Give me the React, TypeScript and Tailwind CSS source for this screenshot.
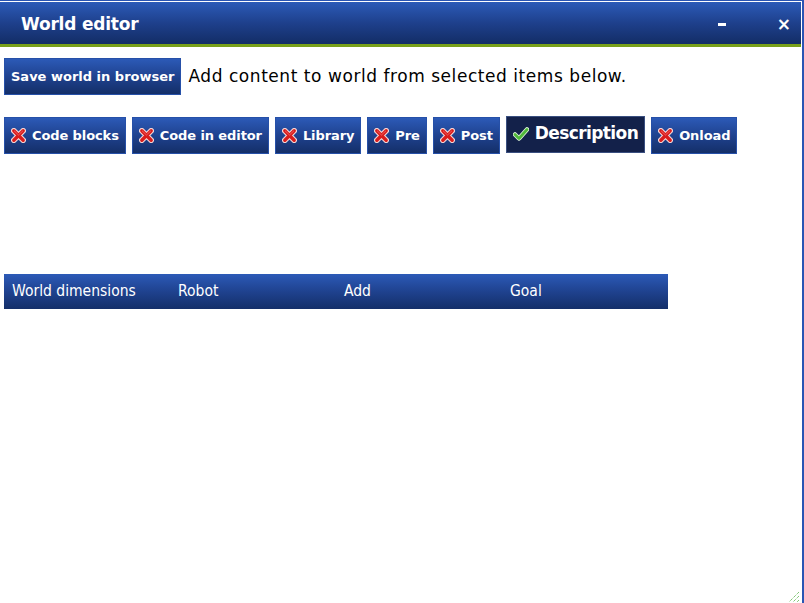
import React from 'react';

function CrossIcon() {
  return (
    <svg width="15" height="15" viewBox="0 0 16 16" className="shrink-0">
      <path d="M3 3 L13 13 M13 3 L3 13" stroke="#f3d6d6" strokeWidth="6" strokeLinecap="round" />
      <path d="M3 3 L13 13 M13 3 L3 13" stroke="#d81c1c" strokeWidth="3.6" strokeLinecap="round" />
      <path d="M3.5 3.2 L8 7.5 M12.5 3.2 L8.5 7" stroke="#f06060" strokeWidth="1" strokeLinecap="round" />
    </svg>
  );
}

function CheckIcon() {
  return (
    <svg width="16" height="14" viewBox="0 0 16 14" className="shrink-0">
      <path d="M2 7.5 L6 11.5 L14 2.5" fill="none" stroke="#dff5d8" strokeWidth="4.5" strokeLinecap="round" strokeLinejoin="round" />
      <path d="M2 7.5 L6 11.5 L14 2.5" fill="none" stroke="#4fb83a" strokeWidth="2.8" strokeLinecap="round" strokeLinejoin="round" />
    </svg>
  );
}

export default function App() {
  const items = [
    { label: "Code blocks", on: false },
    { label: "Code in editor", on: false },
    { label: "Library", on: false },
    { label: "Pre", on: false },
    { label: "Post", on: false },
    { label: "Description", on: true },
    { label: "Onload", on: false },
  ];

  const tabs = ["World dimensions", "Robot", "Add", "Goal"];

  return (
    <div className="w-[804px] h-[603px] overflow-hidden bg-white" style={{ fontFamily: '"DejaVu Sans", Verdana, sans-serif' }}>
      <div className="h-[603px] border-t border-r-2 border-[#2a55b3] pt-[1px] pr-[1px] flex flex-col">
        {/* Title bar */}
        <div className="h-[42px] flex items-center pt-[3px] pl-[21px] pr-[10px] bg-linear-to-b from-[#2c5bb8] via-[#1e408c] to-[#132d66] text-white">
          <span className="font-bold text-[17px] tracking-[-0.2px]">World editor</span>
          <div className="ml-auto flex items-center gap-[51px]">
            <span className="block w-[8px] h-[3px] bg-white" />
            <span className="font-bold text-[17px] leading-none">×</span>
          </div>
        </div>
        <div className="h-[3px] bg-[#78a01a]" />

        {/* Content */}
        <div className="relative flex-1 pl-[4px] pt-[11px]">
          <div className="flex items-center gap-[7px]">
            <button className="h-[37px] px-[6px] text-white font-bold text-[13px] bg-linear-to-b from-[#2c5ab7] via-[#1f428f] to-[#142f69] border border-[#2650a8]">
              Save world in browser
            </button>
            <span className="text-[17px] text-black tracking-[0.55px]">Add content to world from selected items below.</span>
          </div>

          <div className="flex items-center gap-[6px] mt-[22px]">
            {items.map((it, i) =>
              it.on ? (
                <button key={i} className="h-[37px] -mt-[3px] px-[6px] flex items-center gap-[6px] text-white font-bold text-[17px] tracking-[-0.6px] bg-[#13214a] border border-[#3a4f80]">
                  <CheckIcon />
                  {it.label}
                </button>
              ) : (
                <button key={i} className="h-[37px] px-[6px] flex items-center gap-[6px] text-white font-bold text-[13px] tracking-[-0.1px] bg-linear-to-b from-[#2c5ab7] via-[#1f428f] to-[#142f69] border border-[#2650a8]">
                  <CrossIcon />
                  {it.label}
                </button>
              )
            )}
          </div>

          <div className="mt-[120px] w-[664px] h-[35px] flex items-center pl-[8px] bg-linear-to-b from-[#2c5ab7] via-[#1f428f] to-[#142f69] text-white text-[15.5px]" style={{ fontFamily: '"DejaVu Sans Condensed", "DejaVu Sans", sans-serif' }}>
            {tabs.map((t, i) => (
              <span key={i} className="w-[166px] shrink-0">{t}</span>
            ))}
          </div>

          {/* resize handle */}
          <svg width="12" height="12" viewBox="0 0 12 12" className="absolute right-[1px] bottom-[0px]">
            <path d="M11 1 L1 11 M11 5 L5 11 M11 9 L9 11" stroke="#4caf3c" strokeWidth="1" strokeDasharray="1 1" />
          </svg>
        </div>
      </div>
    </div>
  );
}
